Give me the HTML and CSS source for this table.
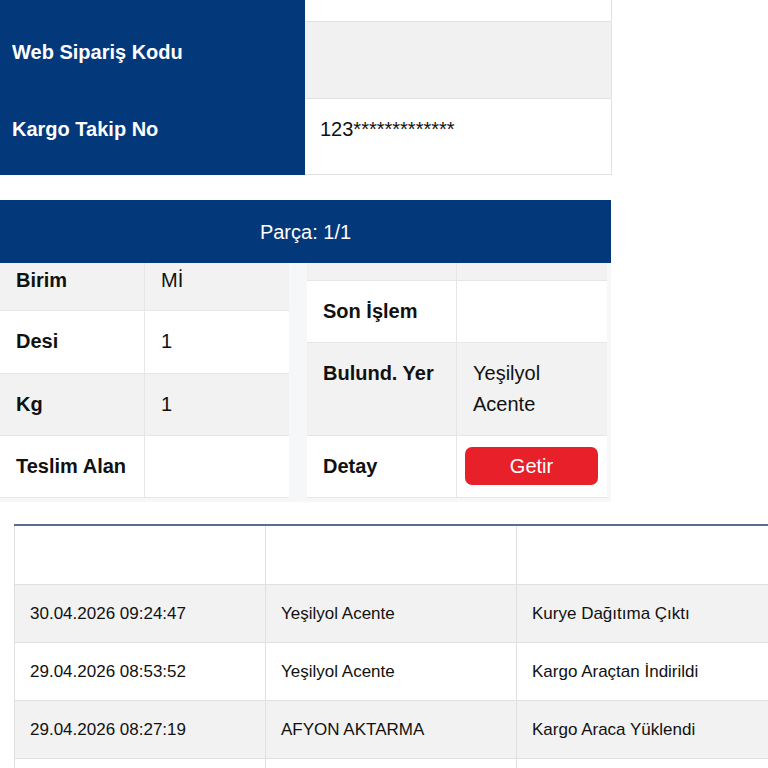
FILE: index.html
```html
<!DOCTYPE html>
<html lang="tr">
<head>
<meta charset="utf-8">
<title>Kargo Takip</title>
<link rel="stylesheet" href="styles.css">
</head>
<body>
<div class="summary">
  <div class="s-label"></div>
  <div class="s-value s-white"></div>
  <div class="s-label">Web Sipariş Kodu</div>
  <div class="s-value s-grey"></div>
  <div class="s-label">Kargo Takip No</div>
  <div class="s-value s-white">123*************</div>
</div>

<div class="part-head">Parça: 1/1</div>

<div class="panel">
  <div class="ptable ptable-left">
    <div class="c lbl grey first">Birim</div>
    <div class="c val grey first">Mİ</div>
    <div class="c lbl">Desi</div>
    <div class="c val">1</div>
    <div class="c lbl grey">Kg</div>
    <div class="c val grey">1</div>
    <div class="c lbl">Teslim Alan</div>
    <div class="c val"></div>
  </div>
  <div class="ptable ptable-right">
    <div class="c lbl grey stub"></div>
    <div class="c val grey stub"></div>
    <div class="c lbl">Son İşlem</div>
    <div class="c val"></div>
    <div class="c lbl grey">Bulund. Yer</div>
    <div class="c val grey">Yeşilyol<br>Acente</div>
    <div class="c lbl">Detay</div>
    <div class="c val btn-cell"><button class="getir" type="button">Getir</button></div>
  </div>
</div>

<table class="history">
  <colgroup>
    <col class="col-a">
    <col class="col-b">
    <col class="col-c">
  </colgroup>
  <thead>
    <tr><th></th><th></th><th></th></tr>
  </thead>
  <tbody>
    <tr class="odd"><td>30.04.2026 09:24:47</td><td>Yeşilyol Acente</td><td>Kurye Dağıtıma Çıktı</td></tr>
    <tr><td>29.04.2026 08:53:52</td><td>Yeşilyol Acente</td><td>Kargo Araçtan İndirildi</td></tr>
    <tr class="odd"><td>29.04.2026 08:27:19</td><td>AFYON AKTARMA</td><td>Kargo Araca Yüklendi</td></tr>
    <tr><td></td><td></td><td></td></tr>
  </tbody>
</table>
</body>
</html>
```

FILE: styles.css
```css
html {
  overflow: hidden;
}

body {
  margin: 0;
  background: #ffffff;
  font-family: "Liberation Sans", Arial, sans-serif;
  color: #111111;
}

/* top summary */
.summary {
  display: grid;
  grid-template-columns: 305px 307px;
  grid-template-rows: 22px 77px 76px;
  width: 612px;
}

.s-label {
  background: #03387a;
  color: #ffffff;
  font-weight: bold;
  font-size: 20px;
  line-height: 24px;
  padding: 19px 0 0 12px;
}

.s-label + .s-value + .s-label {
  padding-top: 18px;
}

.s-value {
  border-right: 1px solid #e2e2e2;
  border-bottom: 1px solid #e2e2e2;
  font-size: 20px;
  line-height: 24px;
  padding: 18px 0 0 15px;
}

.s-white {
  background: #ffffff;
}

.s-grey {
  background: #f1f1f1;
}

/* part header */
.part-head {
  margin-top: 25px;
  width: 611px;
  height: 63px;
  background: #03387a;
  color: #ffffff;
  font-size: 20px;
  line-height: 64px;
  text-align: center;
}

/* detail panel */
.panel {
  display: flex;
  gap: 18px;
  width: 607px;
  padding: 0 4px 4px 0;
  background: #f6f7f9;
}

.ptable {
  display: grid;
  background: #ffffff;
}

.ptable-left {
  width: 289px;
  grid-template-columns: 145px 1fr;
}

.ptable-right {
  width: 300px;
  grid-template-columns: 150px 1fr;
}

.c {
  font-size: 20px;
  line-height: 31px;
  padding: 15px 16px;
  border-bottom: 1px solid #e6e6e6;
  background: #ffffff;
}

.c.lbl {
  font-weight: bold;
  border-right: 1px solid #e6e6e6;
}

.c.grey {
  background: #f2f2f2;
}

.c.first {
  padding-top: 2px;
  padding-bottom: 14px;
}

.c.stub {
  padding: 0;
  height: 17px;
}

.btn-cell {
  padding: 11px 9px 11px 8px;
}

.getir {
  display: block;
  width: 100%;
  height: 38px;
  border: 0;
  border-radius: 7px;
  background: #e8202a;
  color: #ffffff;
  font-family: "Liberation Sans", Arial, sans-serif;
  font-size: 20px;
  line-height: 38px;
  padding: 0;
}

/* history table */
.history {
  margin: 22px 0 0 14px;
  width: 760px;
  border-collapse: collapse;
  table-layout: fixed;
  border-top: 2px solid #5b6d8f;
  border-left: 1px solid #e0e0e0;
}

.col-a,
.col-b {
  width: 251px;
}

.col-c {
  width: 258px;
}

.history th,
.history td {
  height: 57px;
  padding: 0 15px;
  border-right: 1px solid #e0e0e0;
  border-bottom: 1px solid #e0e0e0;
  font-size: 17px;
  font-weight: normal;
  text-align: left;
  white-space: nowrap;
  color: #111111;
}

.history th {
  height: 58px;
  background: #ffffff;
}

.history tr.odd td {
  background: #f2f2f2;
}
```
